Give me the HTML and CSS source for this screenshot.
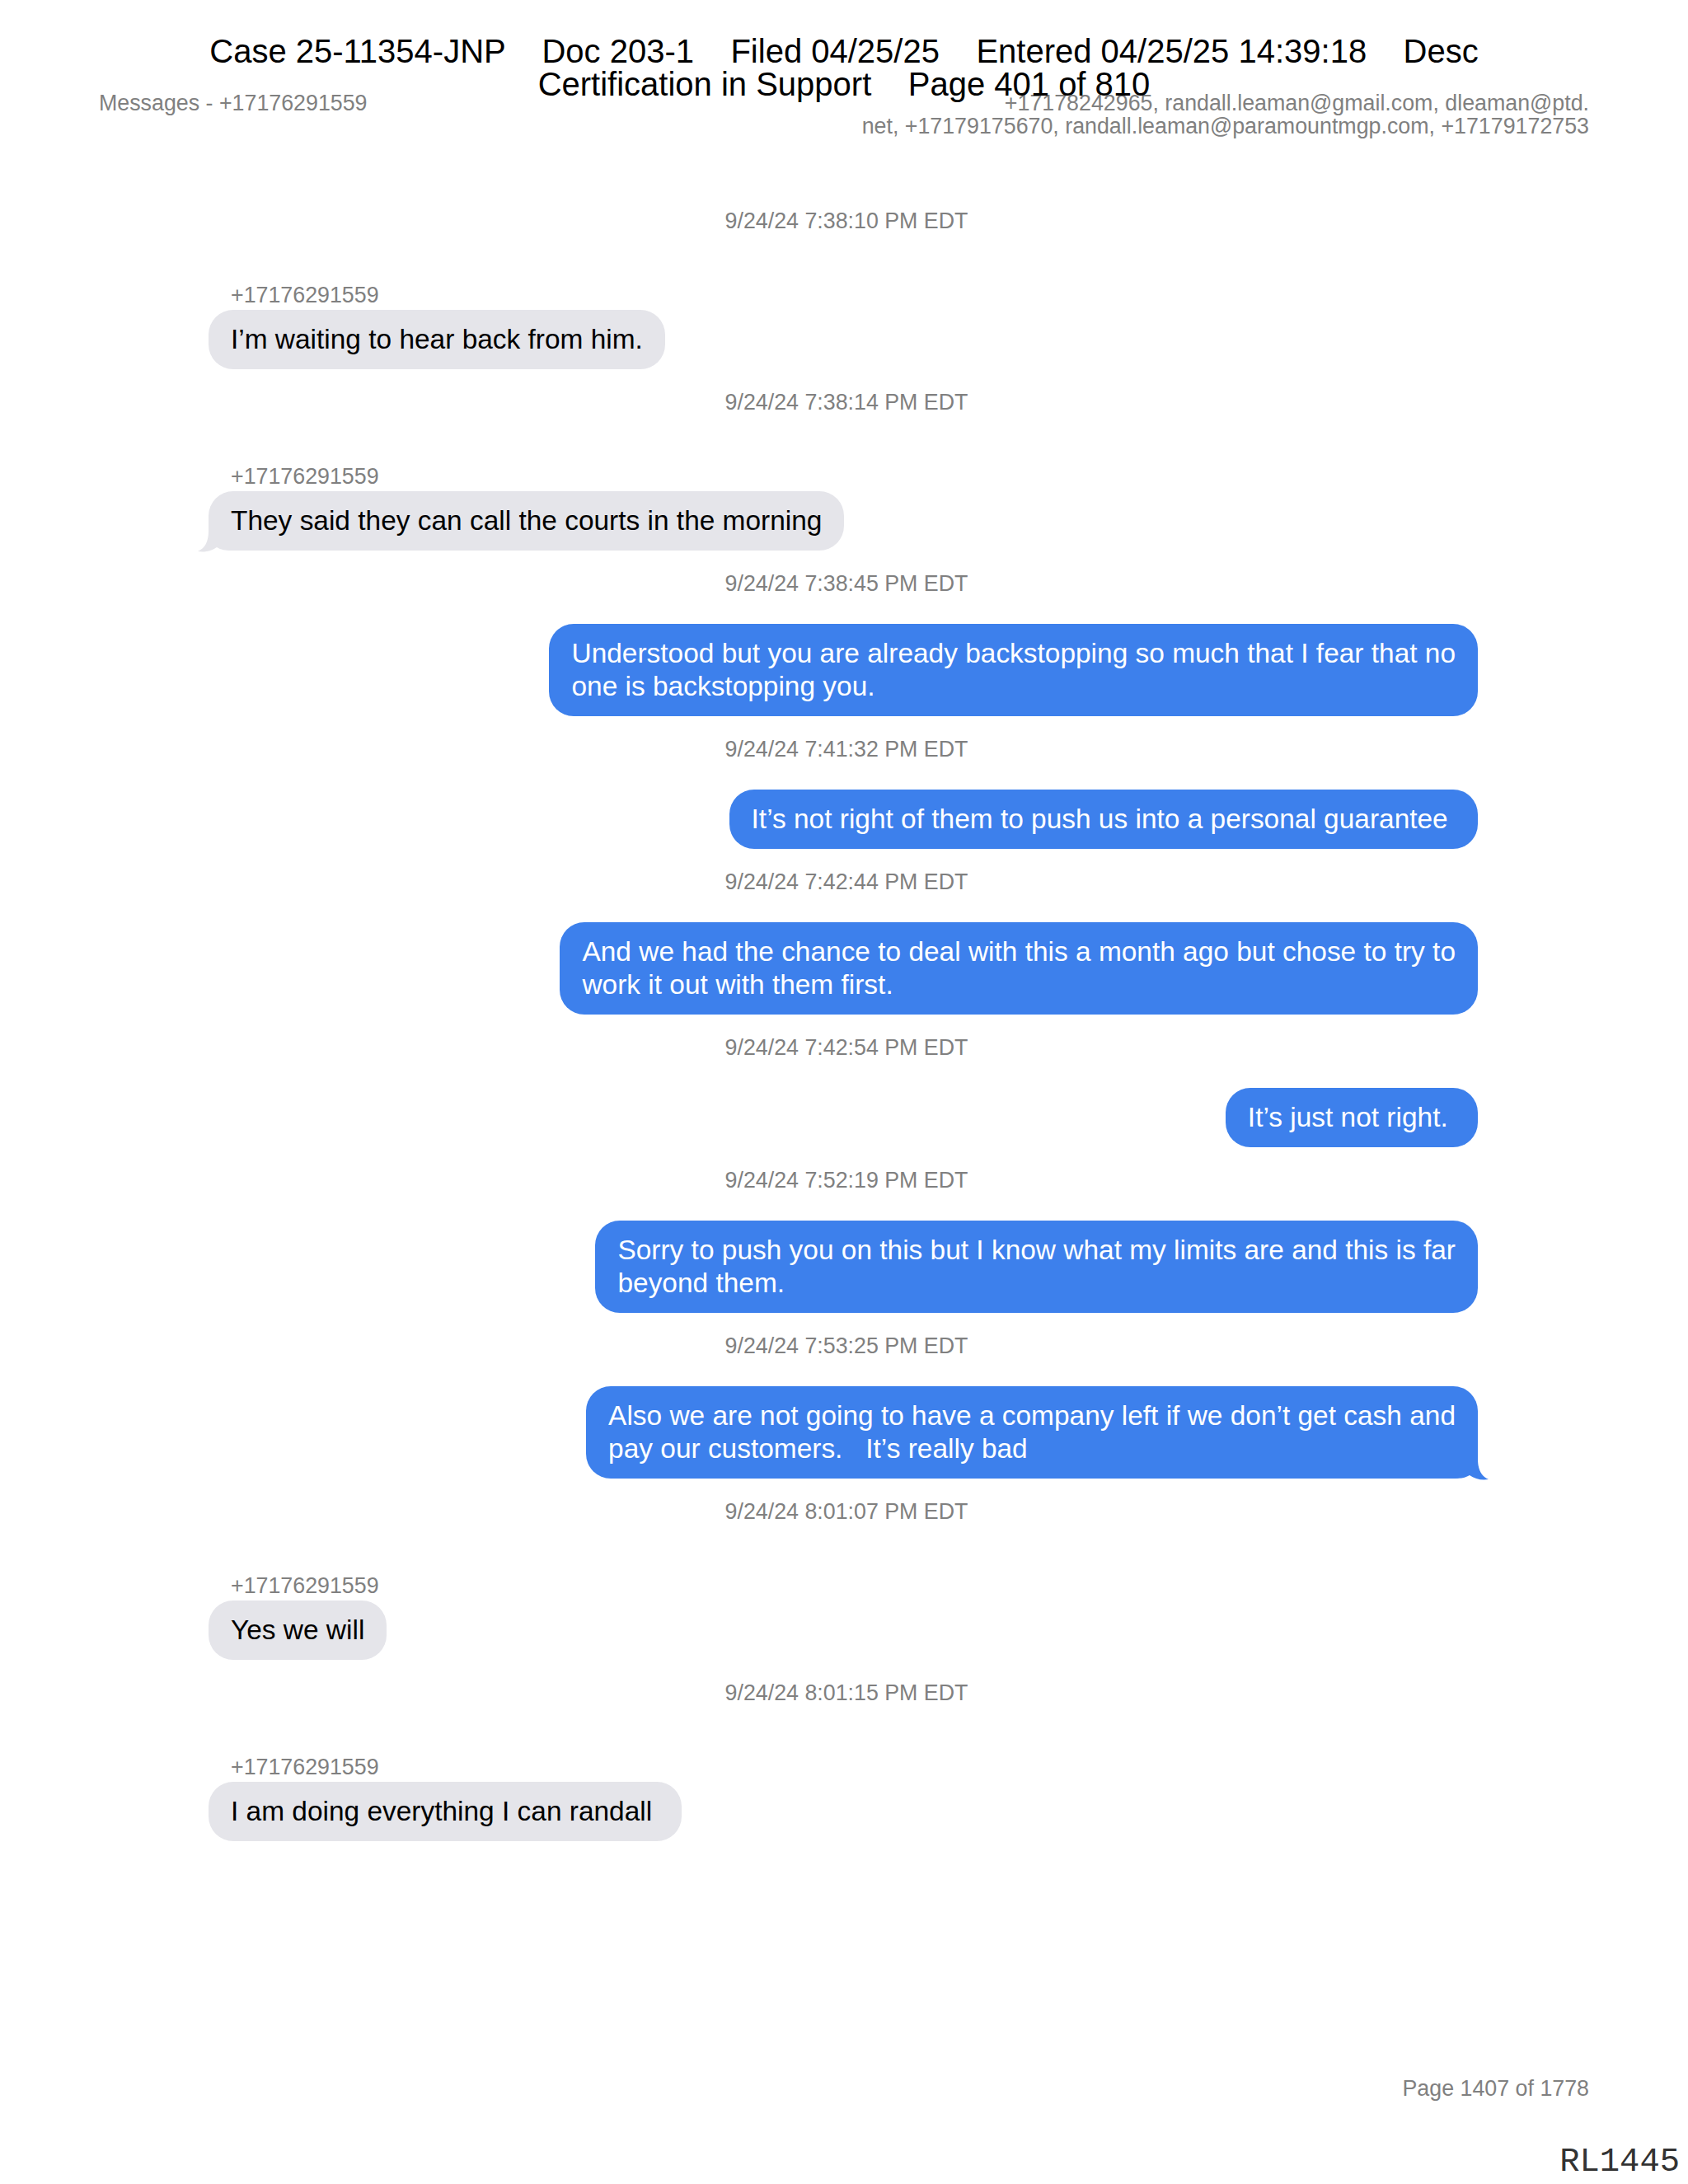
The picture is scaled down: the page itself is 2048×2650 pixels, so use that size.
FILE: index.html
```html
<!DOCTYPE html>
<html lang="en">
<head>
<meta charset="utf-8">
<title>Messages - +17176291559</title>
<link rel="stylesheet" href="styles.css">
</head>
<body>
<div class="page">
  <div class="case-stamp">Case 25-11354-JNP    Doc 203-1    Filed 04/25/25    Entered 04/25/25 14:39:18    Desc
Certification in Support    Page 401 of 810</div>

  <header class="doc-head">
    <div class="doc-title">Messages - +17176291559</div>
    <div class="participants">+17178242965, randall.leaman@gmail.com, dleaman@ptd.<br>net, +17179175670, randall.leaman@paramountmgp.com, +17179172753</div>
  </header>

  <main class="thread">
    <section class="msg in">
      <div class="time">9/24/24 7:38:10 PM EDT</div>
      <div class="sender">+17176291559</div>
      <div class="bubble">I’m waiting to hear back from him.</div>
    </section>

    <section class="msg in">
      <div class="time">9/24/24 7:38:14 PM EDT</div>
      <div class="sender">+17176291559</div>
      <div class="bubble">They said they can call the courts in the morning<svg class="tail" viewBox="0 0 54 42" width="54" height="42"><path d="M0,0 H40 V16 C40,29 44,37 53,41 C45,42.5 36,40.5 30,36 C25,39 20,40 12,40 H0 Z"/></svg></div>
    </section>

    <section class="msg out">
      <div class="time">9/24/24 7:38:45 PM EDT</div>
      <div class="bubble">Understood but you are already backstopping so much that I fear that no<br>one is backstopping you.</div>
    </section>

    <section class="msg out">
      <div class="time">9/24/24 7:41:32 PM EDT</div>
      <div class="bubble">It’s not right of them to push us into a personal guarantee </div>
    </section>

    <section class="msg out">
      <div class="time">9/24/24 7:42:44 PM EDT</div>
      <div class="bubble">And we had the chance to deal with this a month ago but chose to try to<br>work it out with them first.</div>
    </section>

    <section class="msg out">
      <div class="time">9/24/24 7:42:54 PM EDT</div>
      <div class="bubble">It’s just not right. </div>
    </section>

    <section class="msg out">
      <div class="time">9/24/24 7:52:19 PM EDT</div>
      <div class="bubble">Sorry to push you on this but I know what my limits are and this is far<br>beyond them.</div>
    </section>

    <section class="msg out">
      <div class="time">9/24/24 7:53:25 PM EDT</div>
      <div class="bubble">Also we are not going to have a company left if we don’t get cash and<br>pay our customers.   It’s really bad<svg class="tail" viewBox="0 0 54 42" width="54" height="42"><path d="M0,0 H40 V16 C40,29 44,37 53,41 C45,42.5 36,40.5 30,36 C25,39 20,40 12,40 H0 Z"/></svg></div>
    </section>

    <section class="msg in">
      <div class="time">9/24/24 8:01:07 PM EDT</div>
      <div class="sender">+17176291559</div>
      <div class="bubble">Yes we will</div>
    </section>

    <section class="msg in">
      <div class="time">9/24/24 8:01:15 PM EDT</div>
      <div class="sender">+17176291559</div>
      <div class="bubble">I am doing everything I can randall </div>
    </section>
  </main>

  <footer class="page-foot">Page 1407 of 1778</footer>

  <div class="bates">RL1445</div>
</div>
</body>
</html>
```

FILE: styles.css
```css
html, body {
  margin: 0;
  padding: 0;
  background: #ffffff;
}

body {
  font-family: "Liberation Sans", Arial, Helvetica, sans-serif;
  color: #000000;
}

.page {
  position: relative;
  width: 2048px;
  min-height: 2650px;
  box-sizing: border-box;
  padding: 111px 120px 100px 120px;
  display: flex;
  flex-direction: column;
}

/* court filing stamp overlaid on the top of the page */
.case-stamp {
  position: absolute;
  top: 42px;
  left: 0;
  right: 0;
  text-align: center;
  white-space: pre;
  font-size: 40px;
  line-height: 40px;
  color: #000000;
}

.doc-head {
  display: flex;
  justify-content: space-between;
  align-items: flex-start;
  font-size: 26.8px;
  line-height: 28px;
  color: #808080;
}

.participants {
  text-align: right;
}

.thread {
  display: flex;
  flex-direction: column;
  padding: 61px 135px 0 133px;
}

.msg {
  display: flex;
  flex-direction: column;
  margin-top: 24px;
}

.msg.in {
  align-items: flex-start;
}

.msg.out {
  align-items: flex-end;
}

.time {
  align-self: stretch;
  text-align: center;
  font-size: 26.8px;
  line-height: 32px;
  color: #808080;
  margin-bottom: 33px;
  padding-left: 8px;
}

.sender {
  font-size: 26.8px;
  line-height: 32px;
  color: #808080;
  margin: 25px 0 2px 27px;
}

.bubble {
  position: relative;
  z-index: 0;
  font-size: 33.45px;
  line-height: 40px;
  padding: 16px 27px;
  border-radius: 30px;
  white-space: pre;
}

.in .bubble {
  background: #e5e5ea;
  color: #000000;
}

.out .bubble {
  background: #3d80ec;
  color: #ffffff;
}

.tail {
  position: absolute;
  bottom: -2px;
  z-index: -1;
}

.out .tail {
  right: -14px;
  fill: #3d80ec;
}

.in .tail {
  left: -14px;
  transform: scaleX(-1);
  fill: #e5e5ea;
}

.page-foot {
  margin-top: auto;
  text-align: right;
  font-size: 26.8px;
  line-height: 32px;
  color: #808080;
}

.bates {
  position: absolute;
  right: 10px;
  top: 2603px;
  font-family: "Liberation Mono", "Courier New", monospace;
  font-size: 40.5px;
  line-height: 40px;
  color: #333333;
}
```
